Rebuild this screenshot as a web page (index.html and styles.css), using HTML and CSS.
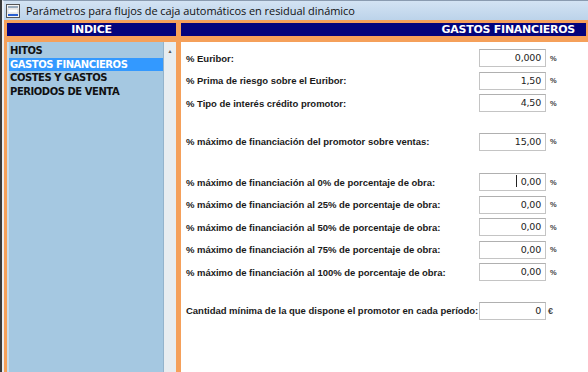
FILE: index.html
```html
<!DOCTYPE html>
<html lang="es">
<head>
    <meta charset="UTF-8">
    <title>Parámetros para flujos de caja automáticos en residual dinámico</title>
    <link rel="stylesheet" href="styles.css">
</head>
<body>
    <div class="window">
        <div class="titlebar">
            <svg class="app-icon" width="14" height="14" viewBox="0 0 14 14">
                <rect x="0.5" y="0.5" width="13" height="13" fill="#f4f4f4" stroke="#555"/>
                <rect x="2" y="2" width="10" height="2" fill="#9ab"/>
                <rect x="2" y="5" width="10" height="4" fill="#fff" stroke="#bbb" stroke-width="0.5"/>
                <rect x="2" y="10" width="10" height="2" fill="#2a5fd0"/>
            </svg>
            <span class="title">Parámetros para flujos de caja automáticos en residual dinámico</span>
        </div>

        <div class="frame">
            <div class="side">
                <div class="head head-left">INDICE</div>
                <div class="side-body">
                    <ul class="index-list">
                        <li>HITOS</li>
                        <li class="selected">GASTOS FINANCIEROS</li>
                        <li>COSTES Y GASTOS</li>
                        <li>PERIODOS DE VENTA</li>
                    </ul>
                    <div class="scrollbar">
                        <span class="arrow">&#9650;</span>
                    </div>
                </div>
            </div>

            <div class="main">
                <div class="head head-right">GASTOS FINANCIEROS</div>
                <div class="content">
                    <div class="row">
                        <label>% Euribor:</label>
                        <div class="field">0,000</div>
                        <span class="unit">%</span>
                    </div>
                    <div class="row">
                        <label>% Prima de riesgo sobre el Euribor:</label>
                        <div class="field">1,50</div>
                        <span class="unit">%</span>
                    </div>
                    <div class="row">
                        <label>% Tipo de interés crédito promotor:</label>
                        <div class="field">4,50</div>
                        <span class="unit">%</span>
                    </div>

                    <div class="row spaced">
                        <label>% máximo de financiación del promotor sobre ventas:</label>
                        <div class="field">15,00</div>
                        <span class="unit">%</span>
                    </div>

                    <div class="row spaced-lg">
                        <label>% máximo de financiación al 0% de porcentaje de obra:</label>
                        <div class="field focused"><span class="caret"></span>0,00</div>
                        <span class="unit">%</span>
                    </div>
                    <div class="row">
                        <label>% máximo de financiación al 25% de porcentaje de obra:</label>
                        <div class="field">0,00</div>
                        <span class="unit">%</span>
                    </div>
                    <div class="row">
                        <label>% máximo de financiación al 50% de porcentaje de obra:</label>
                        <div class="field">0,00</div>
                        <span class="unit">%</span>
                    </div>
                    <div class="row">
                        <label>% máximo de financiación al 75% de porcentaje de obra:</label>
                        <div class="field">0,00</div>
                        <span class="unit">%</span>
                    </div>
                    <div class="row">
                        <label>% máximo de financiación al 100% de porcentaje de obra:</label>
                        <div class="field">0,00</div>
                        <span class="unit">%</span>
                    </div>

                    <div class="row spaced">
                        <label>Cantidad mínima de la que dispone el promotor en cada período:</label>
                        <div class="field">0</div>
                        <span class="unit euro">€</span>
                    </div>
                </div>
            </div>
        </div>
    </div>
</body>
</html>
```

FILE: styles.css
```css
/* Base */
body {
    margin: 0;
    padding: 0;
    width: 588px;
    height: 372px;
    overflow: hidden;
    background: #ffffff;
    font-family: "Liberation Sans", Arial, sans-serif;
}

.window {
    height: 372px;
    display: flex;
    flex-direction: column;
    border-left: 2px solid #3a3a3a;
    box-sizing: border-box;
}

/* Title bar */
.titlebar {
    height: 20px;
    display: flex;
    align-items: center;
    background: linear-gradient(to bottom, #d3e3f3, #bcd3ea);
    border-top: 1px solid #8a9bb0;
    border-left: 2px solid #e9eef4;
    box-sizing: border-box;
    padding-left: 2px;
}

.app-icon {
    margin-right: 6px;
}

.title {
    font-family: "Open Sans", "Noto Sans", sans-serif;
    font-size: 11px;
    color: #111;
    letter-spacing: -0.05px;
}

/* Orange frame */
.frame {
    flex: 1;
    display: flex;
    background-color: #f5a05a;
    padding: 3px 0 0 0;
    border-left: 2px solid #e9eef4;
}

.head {
    height: 13px;
    background-color: #03037c;
    color: #ffffff;
    font-family: "DejaVu Sans", Tahoma, sans-serif;
    font-weight: bold;
    font-size: 11px;
    line-height: 13px;
    letter-spacing: -0.25px;
}

/* Left index */
.side {
    width: 169px;
    margin-left: 3px;
    display: flex;
    flex-direction: column;
}

.head-left {
    text-align: center;
}

.side-body {
    flex: 1;
    margin-top: 6px;
    display: flex;
    border-left: 2px solid #c9dcea;
}

.index-list {
    flex: 1;
    list-style: none;
    margin: 0;
    padding: 2px 0 0 0;
    background-color: #a5c8e1;
    border-right: 1px solid #94b4cc;
}

.index-list li {
    height: 13.7px;
    line-height: 13.7px;
    padding-left: 1px;
    font-family: "DejaVu Sans", Tahoma, sans-serif;
    font-weight: bold;
    font-size: 10px;
    letter-spacing: -0.45px;
    color: #111;
}

.index-list li.selected {
    background-color: #3399ff;
    color: #ffffff;
}

.scrollbar {
    width: 12px;
    background-color: #e8edf0;
    text-align: center;
}

.arrow {
    display: block;
    font-size: 5px;
    color: #555;
    margin-top: 6px;
}

/* Right panel */
.main {
    flex: 1;
    margin-left: 5px;
    display: flex;
    flex-direction: column;
}

.head-right {
    text-align: right;
    padding-right: 11px;
    margin-right: 2px;
}

.content {
    flex: 1;
    margin-top: 6px;
    background-color: #ffffff;
    padding: 5px 0 0 5px;
}

.row {
    height: 22.5px;
    display: flex;
    align-items: center;
}

.row.spaced {
    margin-top: 16px;
}

.row.spaced-lg {
    margin-top: 18px;
}

.row label {
    width: 293px;
    font-size: 9.5px;
    font-weight: bold;
    color: #1a1a1a;
    letter-spacing: -0.02px;
}

.field {
    width: 67px;
    height: 18px;
    box-sizing: border-box;
    border: 1px solid #c4c4c4;
    border-top-color: #b0b0b0;
    background: #ffffff;
    text-align: right;
    padding-right: 4px;
    font-family: "DejaVu Sans", Tahoma, sans-serif;
    font-size: 9.5px;
    line-height: 15px;
    color: #222;
    letter-spacing: -0.2px;
}

.caret {
    display: inline-block;
    width: 1px;
    height: 12px;
    background: #222;
    margin-right: 4px;
    vertical-align: -2px;
}

.unit {
    margin-left: 4px;
    font-size: 7.5px;
    font-weight: bold;
    color: #444;
}

.unit.euro {
    margin-left: 2px;
    font-size: 9px;
}
```
